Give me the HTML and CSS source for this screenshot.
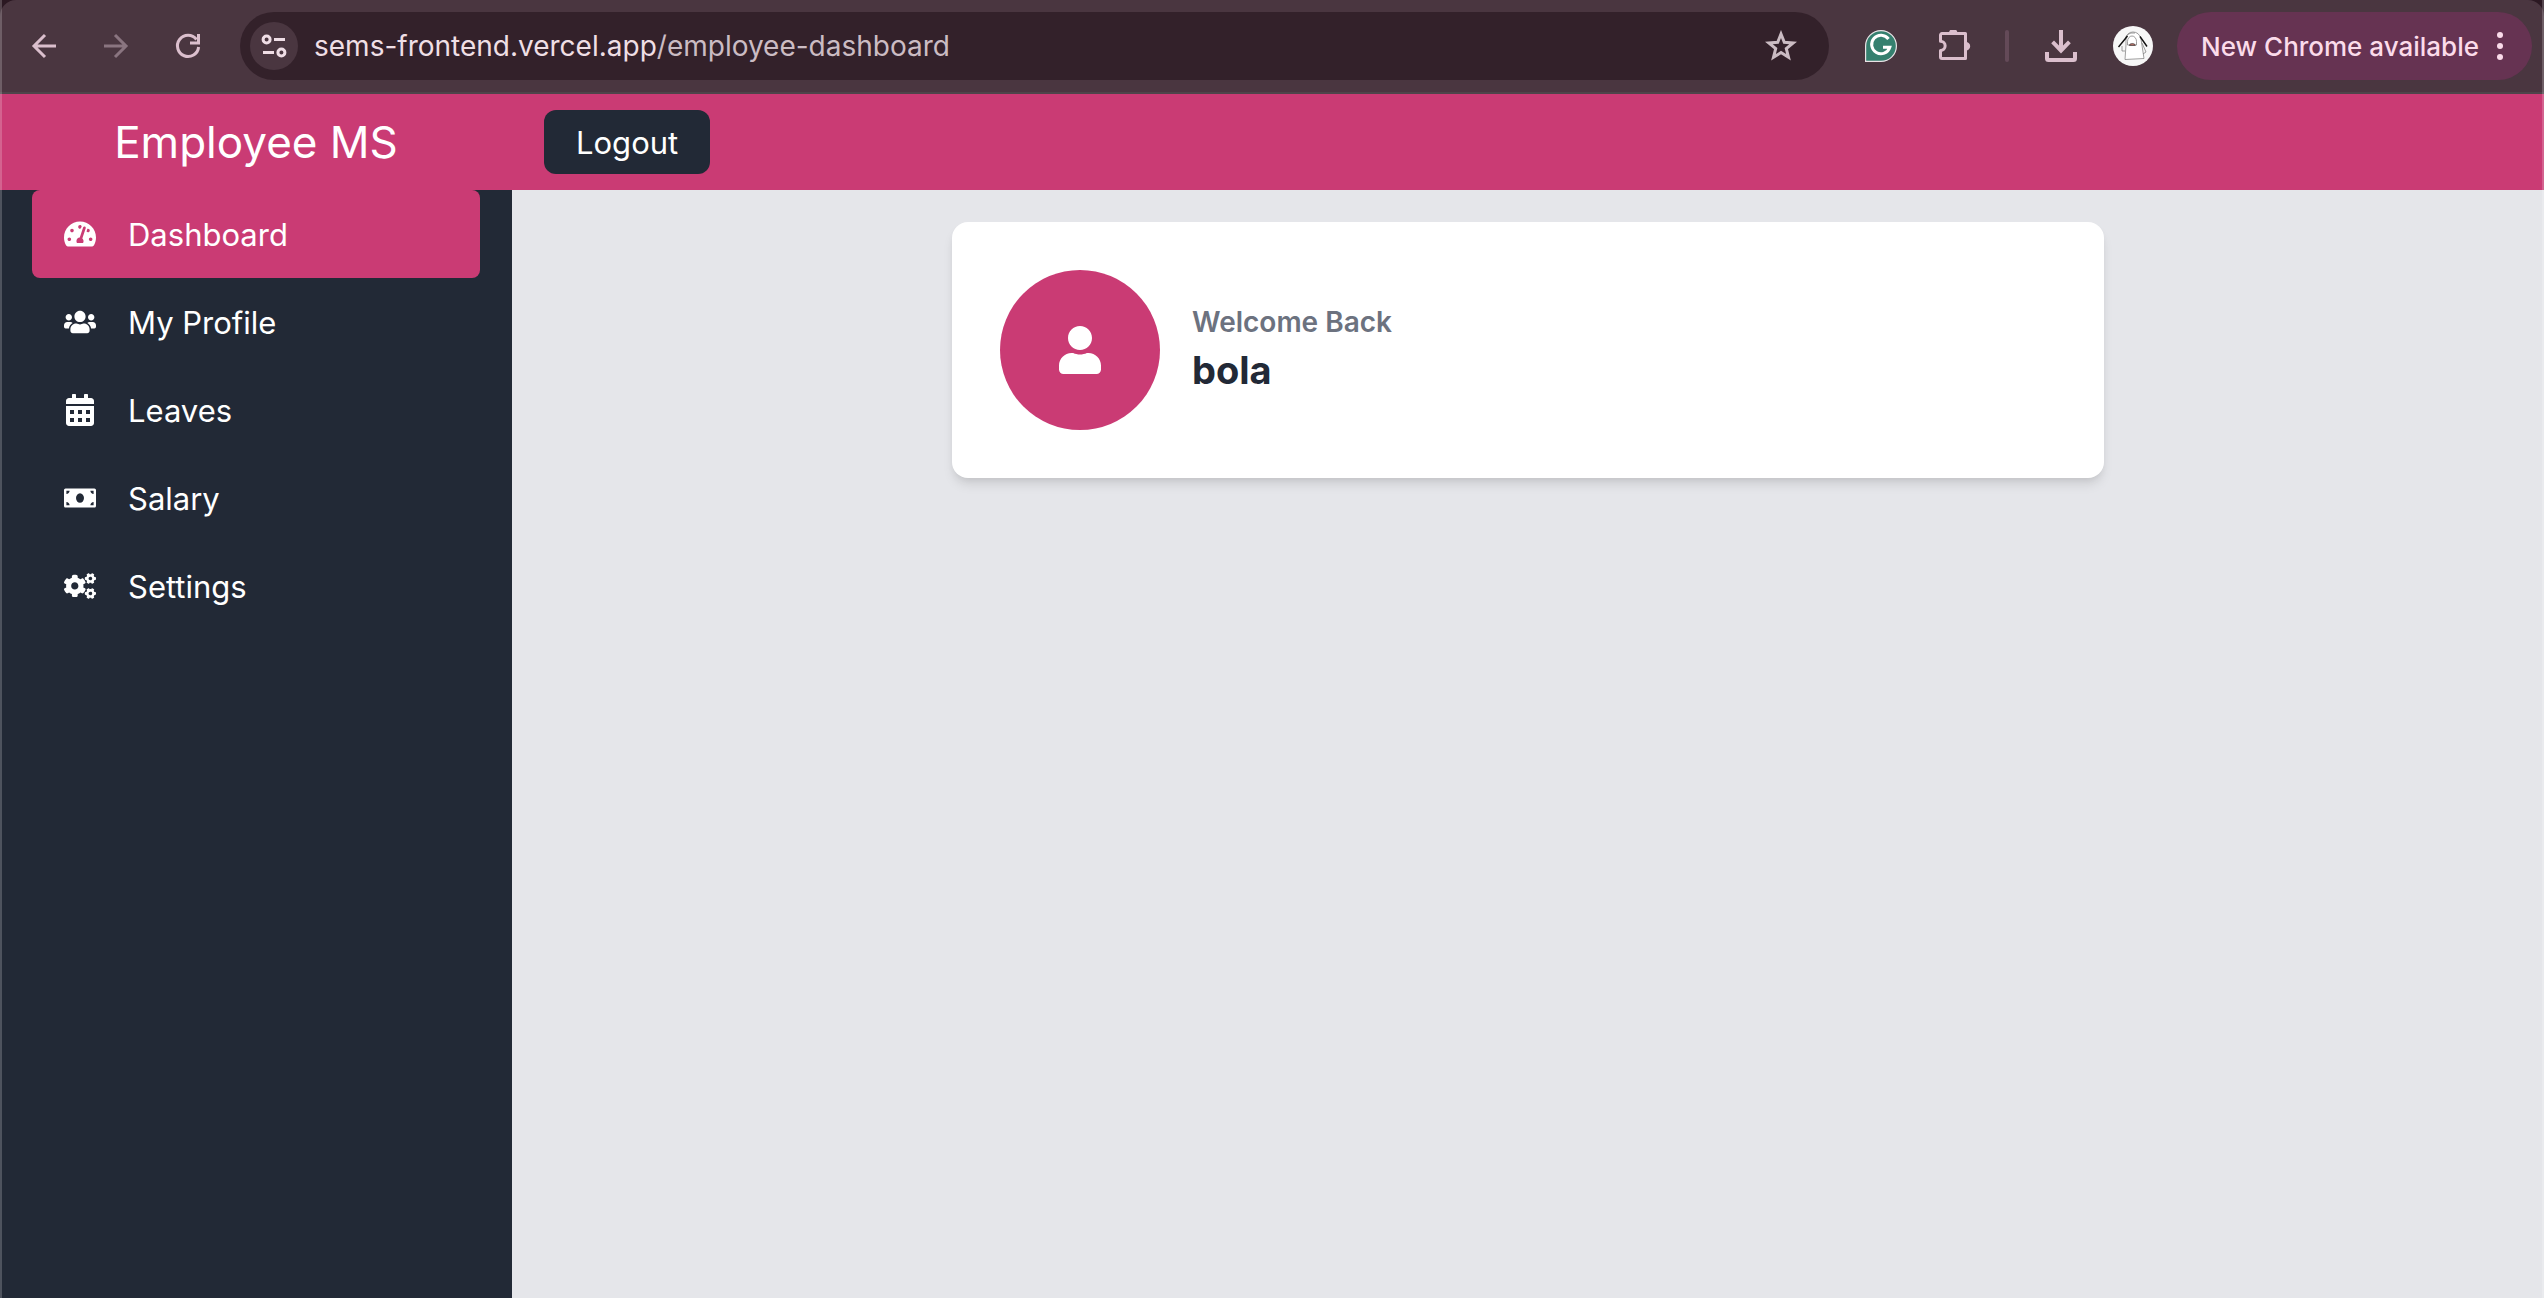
FILE: index.html
```html
<!DOCTYPE html>
<html lang="en">
<head>
<meta charset="utf-8">
<meta name="viewport" content="width=device-width, initial-scale=1">
<title>Employee MS</title>
<link rel="stylesheet" href="styles.css">
</head>
<body>
<div class="window">
  <div class="toolbar-frame">
    <div class="toolbar">
      <div class="nav-buttons">
        <button class="icon-button" type="button" aria-label="Back">
          <svg class="glyph" viewBox="0 0 32 32"><path class="line" d="M28 16H6M17 5 6 16l11 11"/></svg>
        </button>
        <button class="icon-button" type="button" aria-label="Forward" disabled>
          <svg class="glyph" viewBox="0 0 32 32"><path class="line" d="M4 16h22M15 5l11 11-11 11"/></svg>
        </button>
        <button class="icon-button" type="button" aria-label="Reload">
          <svg class="glyph" viewBox="0 0 32 32"><path class="line" d="M26.600 17A10.600 10.600 0 1 1 24.500 9.500"/><path class="solid" d="M25 4h3v10.500H18v-3h7z"/></svg>
        </button>
      </div>
      <div class="omnibox">
        <button class="site-info" type="button" aria-label="View site information">
          <svg class="glyph" viewBox="0 0 32 32"><g class="line"><circle cx="8.600" cy="9.500" r="3.500"/><path d="M16 9.500h11M5 22.500h11"/><circle cx="23.400" cy="22.500" r="3.500"/></g></svg>
        </button>
        <div class="address" role="textbox" contenteditable="true" spellcheck="false" aria-label="Address and search bar">sems-frontend.vercel.app<span class="address-path">/employee-dashboard</span></div>
        <button class="bookmark" type="button" aria-label="Bookmark this tab">
          <svg class="glyph" viewBox="0 0 32 32"><path class="star" d="m16 4 3.300 8.300 8.900.6-6.900 5.700 2.200 8.700-7.500-4.700-7.500 4.700 2.200-8.700-6.900-5.700 8.900-.6z"/></svg>
        </button>
      </div>
      <div class="extensions">
        <button class="icon-button" type="button" aria-label="Grammarly">
          <svg class="glyph" viewBox="0 0 32 32"><path fill="#35806f" stroke="#e9e3e6" stroke-width="1.200" d="M.6 31.400V16A15.400 15.400 0 1 1 16 31.400z"/><path fill="none" stroke="#fff" stroke-width="3" d="M23.500 9A9.300 9.300 0 1 0 24.800 17.300H18"/></svg>
        </button>
        <button class="icon-button" type="button" aria-label="Extensions">
          <svg class="glyph" viewBox="0 0 32 32"><path class="line" d="M3 3.500h23.500v25H3a1.500 1.500 0 0 1-1.500-1.500v-6.500a4.600 4.600 0 0 0 0-9.300V5A1.500 1.500 0 0 1 3 3.500z" stroke-linejoin="round"/><path class="solid" d="M10 3a4.200 4.200 0 0 1 8.400 0zM27 12a4.200 4.200 0 0 1 0 8.400z"/></svg>
        </button>
      </div>
      <span class="divider"></span>
      <button class="icon-button" type="button" aria-label="Downloads">
        <svg class="glyph" viewBox="0 0 32 32"><path class="solid" d="M14 0h4v15.500l5-5 2.800 2.800L16 23.500 6.200 13.300 9 10.500l5 5z"/><path class="tray" d="M2 22v6.500A1.500 1.500 0 0 0 3.500 30h25a1.500 1.500 0 0 0 1.500-1.500V22"/></svg>
      </button>
      <button class="avatar" type="button" aria-label="Profile">
        <svg viewBox="0 0 40 40"><circle cx="20" cy="20" r="20" fill="#f7f7f7"/><g fill="none" stroke="#777" stroke-width=".7"><path d="M12 33.500 13 19V13q1-7 7-7t8 7l3 19.500z" fill="#fff"/><path d="M14.500 19v-3.500a4.500 5.500 0 0 1 9 0V19zM9 20v5h3M29 17l4 9-3 2M12 14q1-8 10-7"/></g><path d="m5.500 21 9-11M27 10.500l7 10" stroke="#111" stroke-width="1.400"/><path d="M16.300 19.500q0-2 3-2t3 2z" fill="#b56e65" stroke="#333" stroke-width=".6"/></svg>
      </button>
      <button class="update" type="button">
        <span>New Chrome available</span>
        <svg class="dots" viewBox="0 0 6 30"><circle cx="3" cy="4" r="3"/><circle cx="3" cy="15" r="3"/><circle cx="3" cy="26" r="3"/></svg>
      </button>
    </div>
  </div>

  <header class="app-header">
    <h1 class="brand">Employee MS</h1>
    <button class="logout" type="button">Logout</button>
  </header>

  <div class="app-body">
    <nav class="sidebar" aria-label="Main">
      <a class="nav-link active" href="#dashboard" aria-current="page">
        <svg class="nav-icon" viewBox="0 0 576 512"><path d="M288 32C128.940 32 0 160.940 0 320c0 52.800 14.250 102.260 39.060 144.800 5.610 9.620 16.300 15.200 27.440 15.200h443c11.140 0 21.830-5.580 27.440-15.200C561.750 422.260 576 372.800 576 320c0-159.060-128.940-288-288-288zm0 64c14.710 0 26.580 10.130 30.320 23.650-1.110 2.260-2.640 4.230-3.450 6.670l-9.220 27.670c-5.130 3.490-10.970 6.010-17.640 6.010-17.670 0-32-14.330-32-32S270.330 96 288 96zM96 384c-17.670 0-32-14.330-32-32s14.330-32 32-32 32 14.330 32 32-14.330 32-32 32zm48-160c-17.670 0-32-14.330-32-32s14.330-32 32-32 32 14.330 32 32-14.330 32-32 32zm246.770-72.410l-61.330 184C343.130 347.330 352 364.540 352 384c0 11.720-3.380 22.550-8.880 32H232.880c-5.500-9.450-8.880-20.280-8.880-32 0-33.940 26.500-61.430 59.900-63.590l61.340-184.010c4.170-12.560 17.730-19.450 30.360-15.170 12.570 4.190 19.350 17.790 15.170 30.360zm14.660 57.200l15.520-46.550c3.470-1.290 7.130-2.230 11.050-2.230 17.670 0 32 14.330 32 32s-14.330 32-32 32c-11.380-.01-20.890-6.280-26.570-15.220zM480 384c-17.670 0-32-14.330-32-32s14.330-32 32-32 32 14.330 32 32-14.330 32-32 32z"/></svg>
        <span>Dashboard</span>
      </a>
      <a class="nav-link" href="#profile">
        <svg class="nav-icon" viewBox="0 0 640 512"><path d="M96 224c35.300 0 64-28.700 64-64s-28.700-64-64-64-64 28.700-64 64 28.700 64 64 64zm448 0c35.300 0 64-28.700 64-64s-28.700-64-64-64-64 28.700-64 64 28.700 64 64 64zm32 32h-64c-17.600 0-33.500 7.100-45.100 18.600 40.300 22.100 68.900 62 75.100 109.400h66c17.700 0 32-14.300 32-32v-32c0-35.300-28.700-64-64-64zm-256 0c61.900 0 112-50.100 112-112S381.900 32 320 32 208 82.100 208 144s50.100 112 112 112zm76.800 32h-8.300c-20.800 10-43.900 16-68.500 16s-47.600-6-68.500-16h-8.300C179.600 288 128 339.600 128 403.200V432c0 26.500 21.500 48 48 48h288c26.500 0 48-21.500 48-48v-28.800c0-63.600-51.600-115.200-115.200-115.200zm-223.700-13.400C161.500 263.100 145.600 256 128 256H64c-35.300 0-64 28.700-64 64v32c0 17.700 14.300 32 32 32h65.900c6.300-47.400 34.900-87.300 75.200-109.400z"/></svg>
        <span>My Profile</span>
      </a>
      <a class="nav-link" href="#leaves">
        <svg class="nav-icon" viewBox="0 0 448 512"><path fill-rule="evenodd" d="M0 464c0 26.500 21.500 48 48 48h352c26.500 0 48-21.500 48-48V192H0zM64 256h64v64H64zM192 256h64v64h-64zM320 256h64v64h-64zM64 384h64v64H64zM192 384h64v64h-64zM320 384h64v64h-64zM400 64h-48V16c0-8.800-7.200-16-16-16h-32c-8.800 0-16 7.200-16 16v48H160V16c0-8.800-7.200-16-16-16h-32c-8.800 0-16 7.200-16 16v48H48C21.500 64 0 85.500 0 112v48h448v-48c0-26.500-21.500-48-48-48z"/></svg>
        <span>Leaves</span>
      </a>
      <a class="nav-link" href="#salary">
        <svg class="nav-icon" viewBox="0 0 640 512"><path d="M608 64H32C14.330 64 0 78.330 0 96v320c0 17.670 14.330 32 32 32h576c17.670 0 32-14.330 32-32V96c0-17.670-14.330-32-32-32zM48 400v-64c35.350 0 64 28.650 64 64H48zm0-224v-64h64c0 35.350-28.650 64-64 64zm272 176c-44.190 0-80-42.990-80-96 0-53.020 35.820-96 80-96s80 42.980 80 96c0 53.030-35.830 96-80 96zm272 48h-64c0-35.350 28.650-64 64-64v64zm0-224c-35.350 0-64-28.650-64-64h64v64z"/></svg>
        <span>Salary</span>
      </a>
      <a class="nav-link" href="#settings">
        <svg class="nav-icon" viewBox="0 0 640 512"><defs><path id="small-gear" d="M512.100 191l-8.200 14.300c-3 5.300-9.400 7.500-15.100 5.400-11.800-4.400-22.600-10.700-32.100-18.600-4.600-3.800-5.800-10.500-2.800-15.700l8.200-14.300c-6.900-8-12.300-17.300-15.900-27.400h-16.500c-6 0-11.200-4.300-12.200-10.300-2-12-2.100-24.600 0-37.100 1-6 6.200-10.400 12.200-10.400h16.500c3.600-10.100 9-19.400 15.900-27.400l-8.200-14.300c-3-5.200-1.900-11.900 2.800-15.700 9.500-7.900 20.400-14.200 32.100-18.600 5.700-2.100 12.100.1 15.100 5.400l8.200 14.300c10.500-1.900 21.200-1.900 31.700 0L552 6.300c3-5.300 9.400-7.500 15.100-5.400 11.800 4.400 22.600 10.700 32.100 18.600 4.600 3.800 5.800 10.500 2.800 15.700l-8.200 14.300c6.900 8 12.300 17.300 15.900 27.400h16.500c6 0 11.200 4.300 12.200 10.300 2 12 2.100 24.600 0 37.100-1 6-6.200 10.400-12.200 10.400h-16.500c-3.600 10.100-9 19.400-15.900 27.400l8.200 14.300c3 5.200 1.900 11.900-2.800 15.700-9.500 7.900-20.400 14.200-32.100 18.600-5.700 2.100-12.100-.1-15.100-5.400l-8.200-14.300c-10.400 1.900-21.200 1.900-31.700 0zm-10.500-58.800c38.500 29.600 82.400-14.300 52.800-52.800-38.500-29.700-82.400 14.300-52.800 52.800z"/></defs><use href="#small-gear"/><use href="#small-gear" y="299"/><path d="M386.300 286.100l33.700 16.800c10.100 5.800 14.500 18.100 10.500 29.100-8.900 24.200-26.400 46.400-42.600 65.800-7.400 8.900-20.200 11.100-30.300 5.300l-29.100-16.800c-16 13.700-34.600 24.600-54.900 31.700v33.600c0 11.600-8.300 21.600-19.700 23.600-24.600 4.200-50.400 4.400-75.900 0-11.500-2-20-11.900-20-23.600V418c-20.300-7.200-38.900-18-54.900-31.700L74 403c-10 5.800-22.900 3.600-30.300-5.300-16.200-19.400-33.300-41.600-42.200-65.700-4-10.900.4-23.200 10.500-29.100l33.300-16.800c-3.900-20.900-3.900-42.400 0-63.400L12 205.800c-10.100-5.800-14.600-18.100-10.500-29 8.900-24.200 26-46.400 42.200-65.800 7.400-8.900 20.200-11.100 30.300-5.300l29.100 16.800c16-13.700 34.600-24.600 54.900-31.700V57.100c0-11.500 8.200-21.500 19.600-23.500 24.600-4.200 50.500-4.400 76-.1 11.500 2 20 11.900 20 23.600v33.600c20.300 7.200 38.900 18 54.900 31.700l29.100-16.800c10-5.800 22.900-3.600 30.300 5.300 16.200 19.400 33.200 41.600 42.100 65.800 4 10.900.1 23.200-10 29.100l-33.700 16.800c3.900 21 3.900 42.500 0 63.500zm-117.600 21.100c59.200-77-28.700-164.900-105.700-105.700-59.200 77 28.700 164.900 105.700 105.700z"/></svg>
        <span>Settings</span>
      </a>
    </nav>
    <main class="content">
      <section class="welcome-card">
        <div class="user-badge">
          <svg class="user-icon" viewBox="0 0 448 512"><path d="M224 256c70.700 0 128-57.300 128-128S294.700 0 224 0 96 57.300 96 128s57.300 128 128 128zm89.600 32h-16.700c-22.200 10.200-46.900 16-72.900 16s-50.600-5.800-72.900-16h-16.700C60.200 288 0 348.200 0 422.400V464c0 26.500 21.500 48 48 48h352c26.500 0 48-21.500 48-48v-41.600c0-74.200-60.200-134.400-134.400-134.400z"/></svg>
        </div>
        <div>
          <p class="greeting">Welcome Back</p>
          <p class="user-name">bola</p>
        </div>
      </section>
    </main>
  </div>
</div>
</body>
</html>
```
FILE: styles.css
```css
:root {
  --pink: #ca3b74;
  --navy: #222936;
  --chrome: #4a3640;
  --chrome-dark: #33212a;
  --chrome-icon: #dbbfcd;
}

* { box-sizing: border-box; }

body {
  margin: 0;
  font-family: Inter, "Liberation Sans", sans-serif;
  color: #fff;
  background: var(--navy);
}

h1, p { margin: 0; }

button {
  margin: 0;
  padding: 0;
  border: 0;
  background: none;
  color: inherit;
  font: inherit;
  cursor: pointer;
}

svg { display: block; }

.window {
  position: relative;
  display: flex;
  flex-direction: column;
  min-height: 100vh;
}

/* Translucent window edge over both sides */
.window::after {
  content: "";
  position: absolute;
  inset: 0;
  border: solid rgba(255, 255, 255, 0.2);
  border-width: 0 2px;
  pointer-events: none;
}

/* Browser toolbar */
.toolbar-frame { background: #2b1822; }

.toolbar {
  display: flex;
  align-items: center;
  height: 94px;
  padding: 0 12px 0 28px;
  border-bottom: 2px solid #4f444a;
  border-radius: 16px 16px 0 0;
  background: var(--chrome);
  color: var(--chrome-icon);
}

.nav-buttons {
  display: flex;
  gap: 40px;
  margin-right: 36px;
}

.icon-button { flex: none; }
.icon-button:disabled { color: #8a7580; }

.glyph {
  width: 32px;
  height: 32px;
}

.line, .tray, .star {
  fill: none;
  stroke: currentColor;
  stroke-width: 3;
}

.tray { stroke-width: 4; }
.solid { fill: currentColor; }

.omnibox {
  display: flex;
  flex: 1;
  align-items: center;
  min-width: 0;
  height: 68px;
  padding: 0 32px 0 10px;
  border-radius: 34px;
  background: var(--chrome-dark);
}

.site-info {
  display: grid;
  flex: none;
  place-items: center;
  width: 48px;
  height: 48px;
  border-radius: 50%;
  background: var(--chrome);
  color: #efdde5;
}

.address {
  flex: 1;
  min-width: 0;
  margin-left: 16px;
  overflow: hidden;
  outline: 0;
  color: #efdfe5;
  font-size: 28px;
  line-height: 40px;
  white-space: nowrap;
}

.address-path { color: #cbbcc3; }
.bookmark { color: #cbbcc3; }

.extensions {
  display: flex;
  gap: 42px;
  margin-left: 36px;
}

.divider {
  width: 4px;
  height: 32px;
  margin: 0 36px 0 34px;
  border-radius: 2px;
  background: #644a58;
}

.avatar {
  flex: none;
  width: 40px;
  margin: 0 24px 0 36px;
}

.update {
  display: flex;
  flex: none;
  align-items: center;
  gap: 18px;
  height: 68px;
  padding: 0 29px 0 24px;
  border-radius: 34px;
  background: #663352;
  color: #fbdbea;
  font-size: 26px;
  font-weight: 500;
}

.dots {
  width: 6px;
  height: 30px;
  fill: currentColor;
}

/* Application header */
.app-header {
  display: flex;
  align-items: center;
  height: 96px;
  background: var(--pink);
}

.brand {
  width: 512px;
  font-size: 44px;
  font-weight: 400;
  text-align: center;
}

.logout {
  height: 64px;
  margin-left: 32px;
  padding: 0 32px;
  border-radius: 12px;
  background: var(--navy);
  font-size: 31px;
}

/* Application body */
.app-body {
  display: flex;
  flex: 1;
}

.sidebar {
  flex: none;
  width: 512px;
  padding: 0 32px;
  background: var(--navy);
}

.nav-link {
  display: flex;
  align-items: center;
  gap: 32px;
  height: 88px;
  padding: 0 32px;
  border-radius: 8px;
  color: #fff;
  font-size: 31px;
  text-decoration: none;
}

.nav-link.active { background: var(--pink); }

.nav-icon {
  width: 32px;
  height: 32px;
  fill: currentColor;
}

.content {
  flex: 1;
  padding: 32px;
  background: #e5e6ea;
}

.welcome-card {
  display: flex;
  align-items: center;
  gap: 32px;
  max-width: 1152px;
  margin: 0 auto;
  padding: 48px;
  border-radius: 16px;
  background: #fff;
  box-shadow: 0 8px 12px -2px rgba(0, 0, 0, 0.1), 0 4px 8px -4px rgba(0, 0, 0, 0.1);
}

.user-badge {
  display: grid;
  place-items: center;
  width: 160px;
  height: 160px;
  border-radius: 50%;
  background: var(--pink);
}

.user-icon {
  width: 48px;
  height: 48px;
  fill: #fff;
}

.greeting {
  color: #6c727f;
  font-size: 28px;
  font-weight: 600;
  line-height: 40px;
}

.user-name {
  color: var(--navy);
  font-size: 38px;
  font-weight: 700;
  line-height: 56px;
}
```
